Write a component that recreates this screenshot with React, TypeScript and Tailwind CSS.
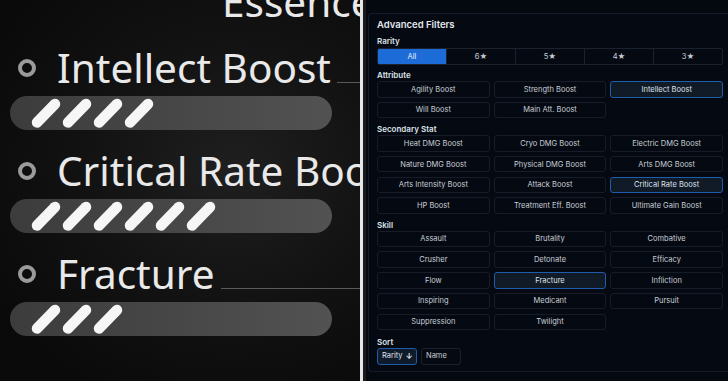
import React from 'react';

const attributes = ['Agility Boost', 'Strength Boost', 'Intellect Boost', 'Will Boost', 'Main Att. Boost'];
const secondary = [
  'Heat DMG Boost',
  'Cryo DMG Boost',
  'Electric DMG Boost',
  'Nature DMG Boost',
  'Physical DMG Boost',
  'Arts DMG Boost',
  'Arts Intensity Boost',
  'Attack Boost',
  'Critical Rate Boost',
  'HP Boost',
  'Treatment Eff. Boost',
  'Ultimate Gain Boost',
];
const skills = [
  'Assault',
  'Brutality',
  'Combative',
  'Crusher',
  'Detonate',
  'Efficacy',
  'Flow',
  'Fracture',
  'Infliction',
  'Inspiring',
  'Medicant',
  'Pursuit',
  'Suppression',
  'Twilight',
];
const rarities = ['All', '6★', '5★', '4★', '3★'];

function Stripes({ count }: { count: number }) {
  return (
    <svg width="322" height="34" className="block">
      {Array.from({ length: count }).map((_, i) => (
        <line
          key={i}
          x1={27 + i * 31}
          y1={26.5}
          x2={45 + i * 31}
          y2={8}
          stroke="#f6f6f6"
          strokeWidth={10.5}
          strokeLinecap="round"
        />
      ))}
    </svg>
  );
}

function EssenceRow({ name, level, trail }: { name: string; level: number; trail?: boolean }) {
  return (
    <div className="flex flex-col">
      <div className="flex items-center h-[40px]">
        <span className="w-[18px] h-[18px] ml-[18px] rounded-full border-[4px] border-[#9b9b9b] shrink-0" />
        <span className="ml-[21px] text-[40.5px] leading-[40px] text-[#e9e9e9] whitespace-nowrap">{name}</span>
        {trail && <span className="flex-1 h-px bg-[#5a5a5a] self-end mb-[5px] ml-[6px]" />}
      </div>
      <div className="mt-[8px] ml-[10px] w-[322px] h-[34px] rounded-full bg-linear-to-r from-[#3c3c3c] to-[#525252]">
        <Stripes count={level} />
      </div>
    </div>
  );
}

function FilterButton({ label, active }: { label: string; active?: boolean }) {
  return (
    <div
      className={`h-[16.5px] flex items-center justify-center rounded-[3px] border text-[7.5px] ${
        active ? 'border-[#1f5cab] bg-[#111a27] text-[#dfe3ea]' : 'border-[#161d28] text-[#c9ced6]'
      }`}
    >
      {label}
    </div>
  );
}

function Section({ title, items, active, mt }: { title: string; items: string[]; active: string; mt: string }) {
  return (
    <div className={mt}>
      <div className="h-[10px] leading-[10px] text-[8px] font-semibold text-[#dde1e7]">{title}</div>
      <div className="grid grid-cols-3 gap-x-[4px] gap-y-[4.2px] mt-[1px]">
        {items.map((it) => (
          <FilterButton key={it} label={it} active={it === active} />
        ))}
      </div>
    </div>
  );
}

export default function App() {
  return (
    <div className="w-[728px] h-[381px] flex overflow-hidden bg-[#04080f]">
      {/* game screenshot crop */}
      <div
        className="w-[360px] h-full overflow-hidden flex flex-col bg-[radial-gradient(ellipse_at_65%_45%,#1f1f1f_0%,#121212_45%,#0a0a0a_85%)]"
        style={{ fontFamily: '"Noto Sans", sans-serif' }}
      >
        <div className="mt-[-18px] ml-[222px] text-[40.5px] leading-[40px] text-[#e9e9e9] whitespace-nowrap">Essence</div>
        <div className="mt-[26px] flex flex-col gap-[21px]">
          <EssenceRow name="Intellect Boost" level={4} trail />
          <EssenceRow name="Critical Rate Boost" level={6} />
          <EssenceRow name="Fracture" level={3} trail />
        </div>
      </div>
      <div className="w-[3px] h-full bg-[#e6e6e6]" />
      <div className="w-[3px] h-full bg-[#1a1a1a]" />

      {/* filters panel */}
      <div className="flex-1 pl-[2px] pt-[13px]" style={{ fontFamily: 'Inter, "Liberation Sans", sans-serif' }}>
        <div className="h-[359px] border-t border-l border-b border-[#151c28] rounded-l-[4px] bg-[#050a12] pl-[8px] pr-[5px] pt-[5px]">
          <div className="h-[12px] leading-[12px] text-[9.5px] font-semibold text-[#e4e7ec]">Advanced Filters</div>

          <div className="mt-[5px]">
            <div className="h-[10px] leading-[10px] text-[8px] font-semibold text-[#dde1e7]">Rarity</div>
            <div className="mt-[2px] flex h-[17px] rounded-[2px] border border-[#1a2230] overflow-hidden">
              {rarities.map((r, i) => (
                <div
                  key={r}
                  className={`flex-1 flex items-center justify-center text-[7.5px] ${
                    i > 0 ? 'border-l border-[#1a2230] text-[#c9ced6]' : 'bg-[#1d6bd6] text-[#e8f0fc]'
                  }`}
                >
                  {r}
                </div>
              ))}
            </div>
          </div>

          <Section title="Attribute" items={attributes} active="Intellect Boost" mt="mt-[5px]" />
          <Section title="Secondary Stat" items={secondary} active="Critical Rate Boost" mt="mt-[6px]" />
          <Section title="Skill" items={skills} active="Fracture" mt="mt-[6px]" />

          <div className="mt-[6.5px]">
            <div className="h-[10px] leading-[10px] text-[8px] font-semibold text-[#dde1e7]">Sort</div>
            <div className="mt-[1px] flex gap-[4px]">
              <div className="w-[40px] h-[17px] flex items-center gap-[3px] px-[4px] rounded-[3px] border border-[#1f5cab] bg-[#0f1a2a] text-[7.5px] text-[#dfe3ea]">
                Rarity <span className="text-[8px] font-bold">↓</span>
              </div>
              <div className="w-[40px] h-[17px] flex items-center px-[4px] rounded-[3px] border border-[#1a2230] text-[7.5px] text-[#c9ced6]">
                Name
              </div>
            </div>
          </div>
        </div>
      </div>
    </div>
  );
}
